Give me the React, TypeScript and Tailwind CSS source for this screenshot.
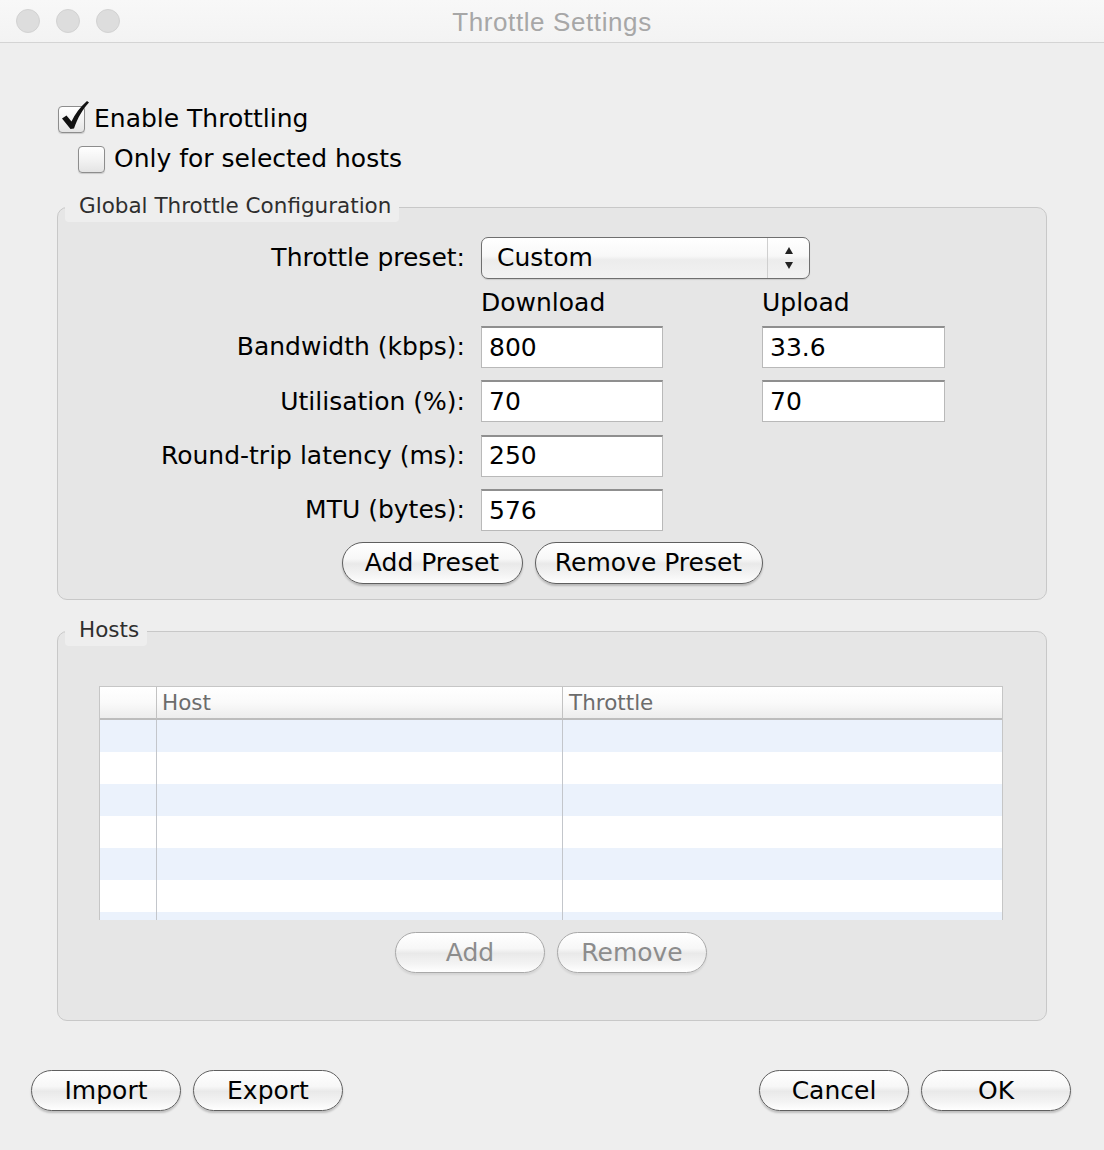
import React from "react";

const body = "font-['DejaVu_Sans','Liberation_Sans',sans-serif]";

function Checkbox({ checked }: { checked?: boolean }) {
  return (
    <span className="relative inline-block h-[27px] w-[27px] shrink-0 rounded-[4px] border border-[#8d8d8d] bg-[linear-gradient(to_bottom,#ffffff,#f3f3f3_50%,#e4e4e4)] shadow-[0_1px_1px_rgba(0,0,0,0.15)]">
      {checked && (
        <svg
          viewBox="0 0 27 27"
          className="absolute left-0 top-0 h-[27px] w-[27px] overflow-visible"
        >
          <path
            d="M3 11.5 L7.5 8.5 L12.5 14.5 C16 7 21 0 28 -6 L30 -4.5 C24 2 18.5 11 15 21.5 L11.5 22 Z"
            fill="#111"
          />
        </svg>
      )}
    </span>
  );
}

function AquaButton({
  children,
  width,
  disabled,
  height = "h-[42px]",
}: {
  children: React.ReactNode;
  width: string;
  disabled?: boolean;
  height?: string;
}) {
  return (
    <button
      className={`${width} ${height} rounded-full border ${
        disabled
          ? "border-[#a9a9a9] text-[#8c8c8c] shadow-[0_2px_2px_rgba(0,0,0,0.08)]"
          : "border-[#5f5f5f] text-black shadow-[0_2px_2px_rgba(0,0,0,0.2)]"
      } bg-[linear-gradient(to_bottom,#ffffff_0%,#f7f7f7_40%,#e9e9e9_52%,#f4f4f4_80%,#ffffff_100%)] text-[25px] leading-none`}
    >
      {children}
    </button>
  );
}

function TextField({ value, width = "w-[182px]" }: { value: string; width?: string }) {
  return (
    <div
      className={`${width} flex h-[42px] items-center border border-t-2 border-[#b9b9b9] border-t-[#8f8f8f] bg-white pl-[7px] text-[25px] text-black`}
    >
      {value}
    </div>
  );
}

function Group({
  title,
  className,
  children,
}: {
  title: string;
  className?: string;
  children: React.ReactNode;
}) {
  return (
    <div
      className={`relative rounded-[10px] border border-[#c8c8c8] bg-[#e6e6e6] ${className ?? ""}`}
    >
      <div className="absolute left-[7px] top-[-17px] flex h-[31px] items-center rounded-b-[4px] bg-[#eeeeee] pl-[14px] pr-[8px] text-[21.5px] text-[#2e2e2e]">
        {title}
      </div>
      {children}
    </div>
  );
}

function FieldRow({
  label,
  download,
  upload,
}: {
  label: string;
  download: string;
  upload?: string;
}) {
  return (
    <div className="flex items-center">
      <div className="w-[407px] text-right text-[25px] text-black">{label}</div>
      <div className="ml-4">
        <TextField value={download} />
      </div>
      {upload && (
        <div className="ml-[99px]">
          <TextField value={upload} width="w-[183px]" />
        </div>
      )}
    </div>
  );
}

const rows = [0, 1, 2, 3, 4, 5, 6];

export default function App() {
  return (
    <div className={`h-[1150px] w-[1104px] overflow-hidden bg-[#eeeeee] ${body}`}>
      {/* title bar */}
      <div className="grid h-[43px] grid-cols-[1fr_auto_1fr] items-center border-b border-[#d4d4d4] bg-[linear-gradient(to_bottom,#f8f8f8,#f3f3f3)]">
        <div className="flex gap-4 pl-4">
          <span className="h-6 w-6 rounded-full border border-[#d2d2d2] bg-[#dddddd]" />
          <span className="h-6 w-6 rounded-full border border-[#d2d2d2] bg-[#dddddd]" />
          <span className="h-6 w-6 rounded-full border border-[#d2d2d2] bg-[#dddddd]" />
        </div>
        <div className="pt-[3px] font-['Liberation_Sans',Arial,sans-serif] text-[26px] tracking-[0.6px] text-[#a7a7a7]">
          Throttle Settings
        </div>
        <div />
      </div>

      <div className="px-[57px] pt-[56px]">
        <label className="flex h-10 items-center gap-[9px] pl-px text-[25px] text-black">
          <Checkbox checked />
          Enable Throttling
        </label>
        <label className="flex h-10 items-center gap-[9px] pl-[21px] text-[25px] text-black">
          <Checkbox />
          Only for selected hosts
        </label>

        <Group title="Global Throttle Configuration" className="mt-[28px] pb-[15px] pt-[29px]">
          <div className="flex items-center">
            <div className="w-[407px] text-right text-[25px] text-black">Throttle preset:</div>
            <div className="ml-4 flex h-[42px] w-[329px] items-center rounded-[7px] border border-[#6f6f6f] bg-[linear-gradient(to_bottom,#ffffff_0%,#f8f8f8_45%,#ececec_55%,#f2f2f2_100%)] shadow-[0_1px_1px_rgba(0,0,0,0.12)]">
              <span className="flex-1 pl-[15px] text-[25px] text-black">Custom</span>
              <span className="flex h-full w-[42px] flex-col items-center justify-center gap-[4px] border-l border-[#cfcfcf]">
                <svg width="10" height="9" viewBox="0 0 10 9">
                  <path d="M5 0 L9 7 L1 7 Z" fill="#222" />
                </svg>
                <svg width="10" height="9" viewBox="0 0 10 9">
                  <path d="M1 2 L9 2 L5 9 Z" fill="#222" />
                </svg>
              </span>
            </div>
          </div>

          <div className="mt-[9px] flex h-[30px] items-center text-[25px] text-black">
            <div className="w-[423px]" />
            <span className="w-[281px]">Download</span>
            <span>Upload</span>
          </div>

          <div className="mt-[8px] flex flex-col gap-[12.33px]">
            <FieldRow label="Bandwidth (kbps):" download="800" upload="33.6" />
            <FieldRow label="Utilisation (%):" download="70" upload="70" />
            <FieldRow label="Round-trip latency (ms):" download="250" />
            <FieldRow label="MTU (bytes):" download="576" />
          </div>

          <div className="mt-[11px] flex justify-center gap-3">
            <AquaButton width="w-[181px]">Add Preset</AquaButton>
            <AquaButton width="w-[228px]">Remove Preset</AquaButton>
          </div>
        </Group>

        <Group title="Hosts" className="mt-[31px] pb-[47px] pl-[41px] pr-[43px] pt-[54px]">
          <div className="h-[234px] overflow-hidden border-l border-r border-t border-[#c6c6c6] bg-white">
            <div className="grid h-[33px] grid-cols-[57px_406px_1fr] border-b-2 border-[#bdbdbd] bg-[linear-gradient(to_bottom,#ffffff_0%,#fafafa_50%,#ededed_100%)] text-[21.5px] text-[#6c6c6c]">
              <div className="border-r border-[#c2c2c2]" />
              <div className="flex items-center border-r border-[#c2c2c2] pl-[5px]">Host</div>
              <div className="flex items-center pl-[6px]">Throttle</div>
            </div>
            {rows.map((i) => (
              <div
                key={i}
                className={`grid h-[32px] grid-cols-[57px_406px_1fr] ${
                  i % 2 === 0 ? "bg-[#ebf2fc]" : "bg-white"
                }`}
              >
                <div className="border-r border-[#c3c6cb]" />
                <div className="border-r border-[#c3c6cb]" />
                <div />
              </div>
            ))}
          </div>

          <div className="mt-[12px] flex justify-center gap-3">
            <AquaButton width="w-[150px]" height="h-[41px]" disabled>
              Add
            </AquaButton>
            <AquaButton width="w-[150px]" height="h-[41px]" disabled>
              Remove
            </AquaButton>
          </div>
        </Group>
      </div>

      <div className="mt-[49px] flex justify-between pl-[31px] pr-[33px]">
        <div className="flex gap-3">
          <AquaButton width="w-[150px]" height="h-[41px]">Import</AquaButton>
          <AquaButton width="w-[150px]" height="h-[41px]">Export</AquaButton>
        </div>
        <div className="flex gap-3">
          <AquaButton width="w-[150px]" height="h-[41px]">Cancel</AquaButton>
          <AquaButton width="w-[150px]" height="h-[41px]">OK</AquaButton>
        </div>
      </div>
    </div>
  );
}
